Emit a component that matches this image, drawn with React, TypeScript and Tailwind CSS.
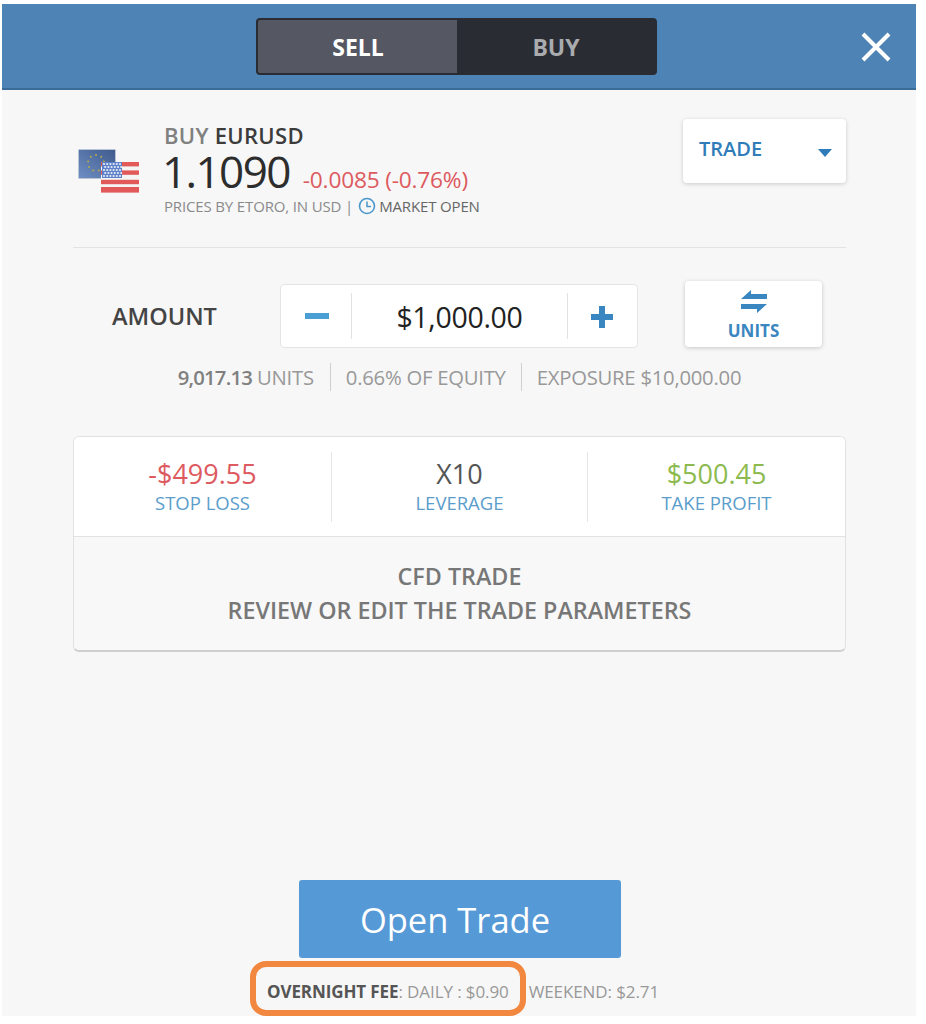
import React from "react";

function Flags() {
  const stars = [0, 1, 2, 3, 4, 5, 6, 7, 8];
  return (
    <svg width="62" height="44" viewBox="0 0 62 44" className="shrink-0 block">
      <defs>
        <linearGradient id="eu" x1="0" y1="1" x2="1" y2="0">
          <stop offset="0" stopColor="#6f8fc4" />
          <stop offset="1" stopColor="#3f5a8c" />
        </linearGradient>
      </defs>
      <rect x="0.5" y="0.5" width="37" height="29" rx="1" fill="url(#eu)" stroke="#b9c4d6" />
      {stars.map((i) => {
        const a = (i / 9) * Math.PI * 2 - Math.PI / 2;
        return <circle key={i} cx={18 + Math.cos(a) * 8} cy={14 + Math.sin(a) * 8} r="1" fill="#b9a94a" />;
      })}
      <rect x="23" y="13" width="38" height="29" fill="#f4f4f4" />
      {[0, 1, 2, 3].map((i) => (
        <rect key={i} x="23" y={13 + i * 8.4 + (i > 1 ? 1 : 0)} width="38" height="4.4" fill="#e2595a" />
      ))}
      <rect x="23" y="38" width="38" height="4" fill="#e2595a" />
      <rect x="24" y="13" width="20" height="16" fill="#5d80c8" />
      {[0, 1, 2, 3, 4].map((r) =>
        [0, 1, 2, 3, 4, 5].map((c) => (
          <circle key={`${r}-${c}`} cx={26 + c * 3.2 + (r % 2) * 1.2} cy={15 + r * 3} r="1.1" fill="#e6ecf8" />
        ))
      )}
    </svg>
  );
}

export default function App() {
  return (
    <div className="w-[926px] h-[1024px] bg-white pt-[4px] pl-[2px] overflow-hidden font-['Open_Sans',sans-serif]">
      <div className="relative w-[914px] h-[1012px] bg-[#f7f7f7]">
        <header className="h-[86px] bg-[#4d84b5] border-b-2 border-[#3a6c98] flex items-start pt-[14px] pl-[254px] pr-[24px] justify-between">
          <div className="flex w-[401px] h-[57px] rounded-[4px] border-2 border-[#2a2c33] bg-[#2a2c33] overflow-hidden">
            <div className="w-[199px] bg-[#555862] flex items-center justify-center text-[23px] font-bold text-white pl-[1px] pt-[1px]">SELL</div>
            <div className="flex-1 flex items-center justify-center text-[23px] font-bold text-[#a9abaf] pt-[1px]">BUY</div>
          </div>
          <svg width="32" height="32" viewBox="0 0 32 32" className="mt-[13px]">
            <path d="M3 3 L29 29 M29 3 L3 29" stroke="#fff" strokeWidth="4" />
          </svg>
        </header>

        <section className="ml-[71px] mr-[70px] h-[158px] border-b border-[#e3e3e3] flex justify-between pt-[29px]">
          <div className="flex">
            <div className="pl-[5px] pt-[30px] w-[91px]"><Flags /></div>
            <div className="pt-[1px]">
              <div className="text-[22px] leading-[30px] font-semibold text-[#808080] tracking-[0.3px]">
                BUY <span className="text-[#3c3c3c]">EURUSD</span>
              </div>
              <div className="flex items-baseline h-[44px] leading-[42px] ml-[-2px]">
                <span className="text-[44px] text-[#2d2d2d] tracking-[-1.6px]">1.1090</span>
                <span className="ml-[13px] text-[22.7px] text-[#dd5a5f] tracking-[-0.2px]">-0.0085 (-0.76%)</span>
              </div>
              <div className="flex items-center text-[15px] leading-[20px] text-[#8a8a8a] mt-[2px] tracking-[-0.15px]">
                PRICES BY ETORO, IN USD |
                <svg width="18" height="18" viewBox="0 0 18 18" className="ml-[5px] mr-[3px]">
                  <circle cx="9" cy="9" r="7.5" fill="none" stroke="#4a97cc" strokeWidth="1.6" />
                  <path d="M9 4.5 V9.5 H13" fill="none" stroke="#4a97cc" strokeWidth="1.5" />
                </svg>
                <span className="text-[#666]">MARKET OPEN</span>
              </div>
            </div>
          </div>
          <div className="w-[163px] h-[64px] bg-white rounded-[4px] shadow-[0_1px_4px_rgba(0,0,0,0.18)] flex items-center justify-between pl-[16px] pr-[13px]">
            <span className="text-[20px] font-semibold text-[#2f7cb8] pb-[4px]">TRADE</span>
            <svg width="16" height="10" viewBox="0 0 16 10" className="mt-[3px]"><path d="M1 1 H15 L8 9 Z" fill="#2f7cb8" /></svg>
          </div>
        </section>

        <section className="flex items-start mt-[33px] pl-[110px]">
          <div className="w-[168px] pt-[20px] text-[23.5px] leading-[30px] font-semibold text-[#444]">AMOUNT</div>
          <div className="mt-[3px] w-[358px] h-[64px] bg-white rounded-[4px] border border-[#e4e4e4] flex items-center">
            <div className="w-[71px] h-[46px] border-r border-[#e2e2e2] flex items-center justify-center pl-[2px]">
              <svg width="24" height="8" viewBox="0 0 24 8"><rect width="24" height="6" y="1" fill="#4a9fd4" /></svg>
            </div>
            <div className="flex-1 h-[46px] pt-[2px] flex items-center justify-center text-[28.5px] text-[#222] tracking-[-0.3px]">$1,000.00</div>
            <div className="w-[70px] h-[46px] pt-[2px] pr-[2px] border-l border-[#e2e2e2] flex items-center justify-center">
              <svg width="24" height="24" viewBox="0 0 24 24"><path d="M12 1 V23 M1 12 H23" stroke="#3a86c0" strokeWidth="6" /></svg>
            </div>
          </div>
          <div className="ml-[47px] w-[137px] h-[66px] bg-white rounded-[4px] shadow-[0_1px_4px_rgba(0,0,0,0.2)] flex flex-col items-center pt-[8px]">
            <svg width="28" height="25" viewBox="0 0 28 25">
              <path d="M1 10 L11 1 V5 H27 V10 Z M27 15 L17 24 V20 H1 V15 Z" fill="#3a86c0" />
            </svg>
            <span className="text-[17px] leading-[24px] font-bold text-[#3a86c0] mt-[5px]">UNITS</span>
          </div>
        </section>

        <section className="flex justify-center items-center mt-[15px] pl-[1px] text-[20.3px] leading-[28px] text-[#999] tracking-[-0.25px]">
          <span className="pr-[16px]"><span className="font-semibold text-[#808080] tracking-[-0.8px]">9,017.13</span> UNITS</span>
          <span className="px-[15px] border-l border-[#cfcfcf]">0.66% OF EQUITY</span>
          <span className="pl-[15px] border-l border-[#cfcfcf]">EXPOSURE $10,000.00</span>
        </section>

        <section className="ml-[71px] mr-[70px] mt-[45px] h-[216px] rounded-[6px] border border-[#e2e2e2] border-b-2 border-b-[#cfcfcf] bg-[#f8f8f8] overflow-hidden">
          <div className="h-[100px] bg-white border-b border-[#e2e2e2] grid grid-cols-3 items-center text-center">
            <div className="h-[70px] flex flex-col justify-center pb-[2px]">
              <div className="text-[27px] leading-[34px] text-[#dd5a5f]">-$499.55</div>
              <div className="text-[18.5px] leading-[24px] text-[#5a9dcc]">STOP LOSS</div>
            </div>
            <div className="h-[70px] flex flex-col justify-center pb-[2px] border-x border-[#e6e6e6]">
              <div className="text-[27px] leading-[34px] text-[#555]">X10</div>
              <div className="text-[18.5px] leading-[24px] text-[#5a9dcc]">LEVERAGE</div>
            </div>
            <div className="h-[70px] flex flex-col justify-center pb-[2px]">
              <div className="text-[27px] leading-[34px] text-[#8cba4e]">$500.45</div>
              <div className="text-[18.5px] leading-[24px] text-[#5a9dcc]">TAKE PROFIT</div>
            </div>
          </div>
          <div className="pt-[22px] text-center text-[23.3px] leading-[34px] font-semibold text-[#777]">
            <div>CFD TRADE</div>
            <div>REVIEW OR EDIT THE TRADE PARAMETERS</div>
          </div>
        </section>

        <section className="ml-[297px] mt-[228px] w-[322px] h-[78px] rounded-[3px] bg-[#5599d6] flex items-center justify-center pr-[10px] pt-[2px] text-[34.5px] text-white">
          Open Trade
        </section>

        <footer className="flex items-center pl-[265px] mt-[22px] text-[17px] leading-[24px] text-[#999] tracking-[-0.1px]">
          <span><span className="font-bold text-[#555]">OVERNIGHT FEE</span>: DAILY : $0.90</span>
          <span className="ml-[20px]">WEEKEND: $2.71</span>
        </footer>

        <div className="absolute left-[248px] top-[957px] w-[276px] h-[55px] rounded-[16px] border-[6px] border-[#f28740]" />
      </div>
    </div>
  );
}
